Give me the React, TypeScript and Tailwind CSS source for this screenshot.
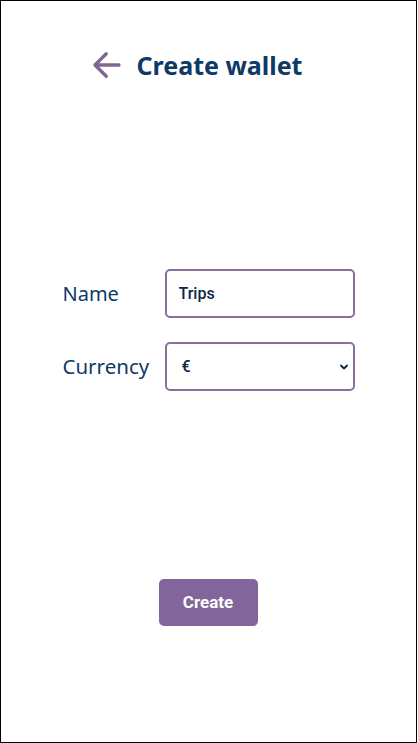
import { useState } from "react";

export default function App() {
  const [name, setName] = useState("Trips");
  const [currency, setCurrency] = useState("€");

  return (
    <div className="w-[417px] h-[743px] border border-black bg-white flex flex-col items-center font-['Noto_Sans',sans-serif]">
      {/* Header */}
      <div className="mt-[46px] flex items-center gap-[12px] mr-[22px]">
        <button className="text-[#7f6694] -ml-[4px]">
          <svg width="36" height="36" viewBox="0 0 24 24" fill="none" stroke="currentColor" strokeWidth="2.2" strokeLinecap="round" strokeLinejoin="round">
            <path d="M11.5 19.5L4 12l7.5-7.5" />
            <path d="M20 12H4.5" />
          </svg>
        </button>
        <h1 className="text-[25px] font-bold text-[#0d3a66] leading-[36px]">Create wallet</h1>
      </div>

      {/* Form */}
      <div className="mt-[186px] grid grid-cols-[102px_190px] gap-y-[24px] items-center">
        <label className="text-[20px] text-[#0d3a66]">Name</label>
        <input
          value={name}
          onChange={(e) => setName(e.target.value)}
          className="h-[49px] w-[190px] border-2 border-[#8a6e9d] rounded-[5px] px-[12px] text-[16px] font-medium text-[#0b2845] font-['Roboto',sans-serif] outline-none"
        />
        <label className="text-[20.5px] text-[#0d3a66]">Currency</label>
        <div className="relative">
          <select
            value={currency}
            onChange={(e) => setCurrency(e.target.value)}
            className="appearance-none block h-[49px] w-[190px] border-2 border-[#8a6e9d] rounded-[5px] px-[15px] text-[16px] font-medium text-[#0b2845] font-['Roboto',sans-serif] bg-white outline-none"
          >
            <option value="€">€</option>
            <option value="$">$</option>
            <option value="£">£</option>
          </select>
          <svg className="absolute right-[6px] top-[20px] pointer-events-none" width="10" height="10" viewBox="0 0 10 10" fill="none" stroke="#0b2845" strokeWidth="1.8" strokeLinecap="round" strokeLinejoin="round">
            <path d="M2 3.5l3 3 3-3" />
          </svg>
        </div>
      </div>

      {/* Submit */}
      <button className="mt-[188px] ml-[-1px] w-[99px] h-[47px] rounded-[5px] bg-[#82659a] text-white text-[17px] font-bold font-['Roboto',sans-serif]">
        Create
      </button>
    </div>
  );
}
